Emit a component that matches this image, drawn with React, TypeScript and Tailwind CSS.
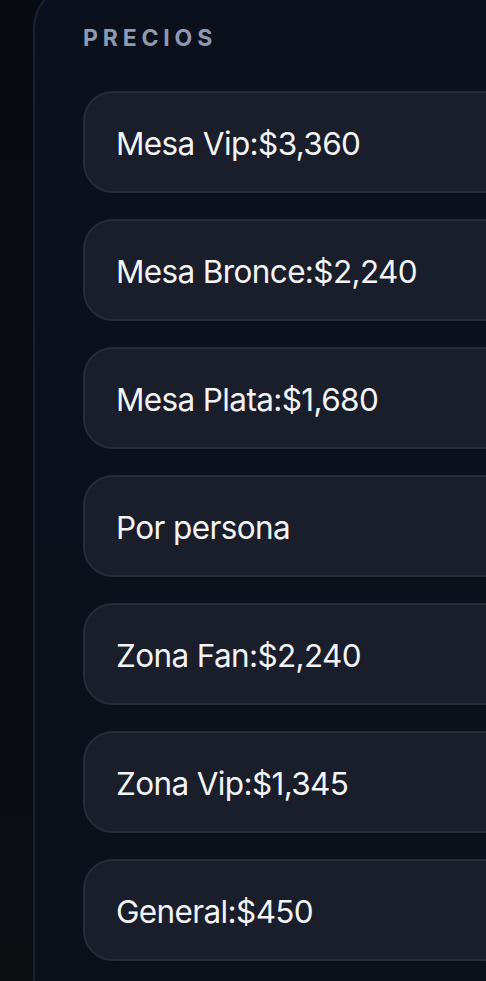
const prices = [
  "Mesa Vip:$3,360",
  "Mesa Bronce:$2,240",
  "Mesa Plata:$1,680",
  "Por persona",
  "Zona Fan:$2,240",
  "Zona Vip:$1,345",
  "General:$450",
];

export default function App() {
  return (
    <div
      className="min-h-[981px] w-[486px] overflow-hidden bg-gradient-to-b from-[#070a11] to-[#0c0d11]"
      style={{ fontFamily: "Inter, 'Noto Sans', sans-serif" }}
    >
      <div className="-mt-[16px] ml-[33px] min-h-[997px] w-[600px] rounded-tl-[44px] border-l-2 border-t-2 border-[#1b2130] bg-gradient-to-b from-[#0b101c] to-[#0b0f1a] pl-[48px] pt-[38px]">
        <h2 className="mb-[39px] text-[23px] font-bold uppercase leading-[28px] tracking-[0.21em] text-[#8e9ab1]">
          Precios
        </h2>
        <ul className="flex flex-col gap-[26px]">
          {prices.map((p) => (
            <li
              key={p}
              className="flex h-[102px] items-center rounded-[30px] border-2 border-[#252b39] bg-[#191e2a] pl-[31px] pt-[3px] text-[31.5px] tracking-[-0.02em] text-[#f3f4f7]"
            >
              {p}
            </li>
          ))}
        </ul>
      </div>
    </div>
  );
}
